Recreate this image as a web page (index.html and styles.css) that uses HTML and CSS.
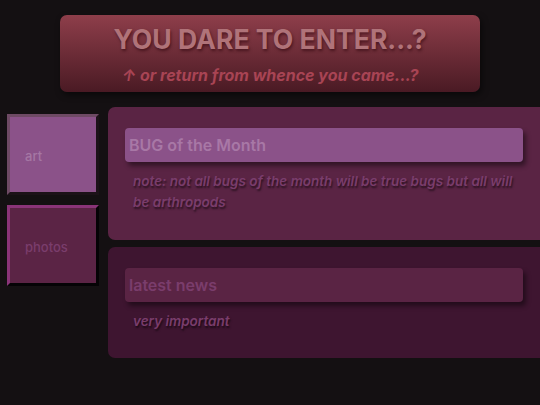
FILE: index.html
```html
<!DOCTYPE html>
<html>
<head>
<meta charset="utf-8">
<link rel="stylesheet" href="styles.css">
</head>
<body>
<header class="banner">
  <h1 class="banner-title">YOU DARE TO ENTER...?</h1>
  <p class="banner-sub">↑ or return from whence you came...?</p>
</header>
<div class="layout">
  <nav class="nav">
    <a class="nav-btn nav-art">art</a>
    <a class="nav-btn nav-photos">photos</a>
  </nav>
  <main class="main">
    <section class="panel panel-bug">
      <h2 class="panel-head">BUG of the Month</h2>
      <p class="panel-text">note: not all bugs of the month will be true bugs but all will be arthropods</p>
    </section>
    <section class="panel panel-news">
      <h2 class="panel-head">latest news</h2>
      <p class="panel-text">very important</p>
    </section>
  </main>
</div>
</body>
</html>
```
FILE: styles.css
```css
html, body {
  margin: 0;
  padding: 0;
  background: #141012;
  font-family: Inter, "Noto Sans", sans-serif;
  overflow: hidden;
}
body {
  width: 540px;
  height: 405px;
}
.banner {
  width: 420px;
  height: 77px;
  margin: 15px auto 0;
  box-sizing: border-box;
  border-radius: 7px;
  background: linear-gradient(#8e3e4a, #4a1a24);
  box-shadow: 2px 3px 6px rgba(0,0,0,0.5);
  text-align: center;
  padding-top: 8px;
}
.banner-title {
  margin: 0;
  font-size: 26.6px;
  line-height: 32px;
  font-weight: 700;
  color: #b07379;
  text-shadow: 1px 2px 3px rgba(40,0,10,0.55);
}
.banner-sub {
  margin: 10px 0 0;
  font-size: 16px;
  line-height: 20px;
  font-weight: 700;
  font-style: italic;
  color: #a84454;
}
.layout {
  display: flex;
  gap: 9px;
  margin-top: 15px;
  padding-left: 7px;
}
.nav {
  display: flex;
  flex-direction: column;
  gap: 10px;
  margin-top: 7px;
}
.nav-btn {
  display: flex;
  align-items: center;
  box-sizing: border-box;
  width: 92px;
  height: 81px;
  padding-left: 15px;
  padding-top: 2px;
  font-size: 13px;
  font-weight: 500;
  border-width: 3px;
  border-style: solid;
}
.nav-art {
  background: #8b5289;
  color: #a577a4;
  border-color: #6e4a64 #1c1218 #1c1218 #6e4a64;
}
.nav-photos {
  background: #5b2445;
  color: #7a3d6c;
  border-color: #8a3478 #050305 #050305 #8a3478;
}
.main {
  flex: 1;
  display: flex;
  flex-direction: column;
  gap: 7px;
}
.panel {
  border-radius: 7px 0 0 7px;
  padding: 21px 17px 27px;
}
.panel-bug { background: #5a2444; }
.panel-news { background: #3e1530; padding-top: 21px; padding-bottom: 26px; }
.panel-head {
  margin: 0;
  height: 34px;
  line-height: 34px;
  padding-left: 4px;
  border-radius: 4px;
  font-size: 16px;
  font-weight: 600;
  box-shadow: 3px 4px 5px rgba(0,0,0,0.45);
}
.panel-bug .panel-head { background: #8b5289; color: #a878a6; }
.panel-news .panel-head { background: #5a2444; color: #7a3d6c; }
.panel-text {
  margin: 9px 0 0;
  padding-left: 8px;
  font-size: 13.5px;
  line-height: 21px;
  font-style: italic;
  font-weight: 600;
  color: #7a3d6c;
  text-shadow: 1px 2px 2px rgba(0,0,0,0.55);
}
```
